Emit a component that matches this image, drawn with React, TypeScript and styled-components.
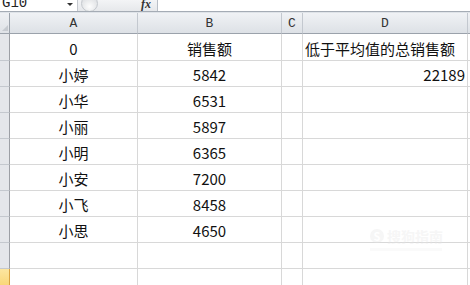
import * as React from "react";
import styled, { createGlobalStyle } from "styled-components";

const GlobalStyle = createGlobalStyle`
  html, body {
    margin: 0;
    padding: 0;
    background: #ffffff;
    overflow: hidden;
  }
  body {
    font-family: "Noto Sans CJK SC", "Liberation Sans", sans-serif;
  }
`;

const Page = styled.div`
  position: relative;
  width: 470px;
  height: 285px;
  overflow: hidden;
  background: #fff;
`;

const FormulaBar = styled.div`
  display: flex;
  align-items: flex-end;
  height: 11px;
  overflow: hidden;
  border-bottom: 1px solid #a5acb5;
  box-shadow: 0 1px 0 #dfe3e8;
  margin-bottom: 1px;
`;

const NameBox = styled.div`
  display: flex;
  align-items: flex-end;
  justify-content: space-between;
  width: 78px;
  height: 11px;
  padding: 0 4px 0 2px;
  box-sizing: border-box;
  font-family: "Liberation Mono", monospace;
  font-size: 14px;
  line-height: 14px;
  color: #222;
  border-right: 1px solid #c5c9cf;
`;

const NameText = styled.span`
  margin-bottom: 1px;
`;

const Arrow = styled.span`
  width: 0;
  height: 0;
  border-left: 3px solid transparent;
  border-right: 3px solid transparent;
  border-top: 3px solid #333;
  margin-bottom: 5px;
`;

const ButtonStrip = styled.div`
  display: flex;
  align-items: flex-end;
  justify-content: space-between;
  width: 80px;
  height: 11px;
  padding: 0 6px 0 3px;
  box-sizing: border-box;
  background: linear-gradient(#f3f4f6, #e6e8eb);
  border-right: 1px solid #b9bfc7;
`;

const RoundKnob = styled.span`
  width: 15px;
  height: 15px;
  border-radius: 50%;
  background: radial-gradient(circle at 50% 70%, #fdfdfd, #d3d6da);
  border: 1px solid #c4c8cd;
  margin-bottom: -1px;
`;

const FxLabel = styled.span`
  font-family: "Liberation Serif", serif;
  font-style: italic;
  font-weight: bold;
  font-size: 12px;
  line-height: 12px;
  color: #333;
  margin-bottom: 1px;
`;

const FormulaInput = styled.div`
  flex: 1;
  height: 11px;
  background: #fff;
`;

const Sheet = styled.div`
  display: grid;
  grid-template-columns: 10px 128px 144px 21px 165px 1fr;
  grid-template-rows: 21px 27px repeat(9, 26px);
`;

const Corner = styled.div`
  position: relative;
  background: linear-gradient(#eef0f3, #dfe2e7);
  border-right: 1px solid #9ba2ab;
  border-bottom: 1px solid #9ba2ab;
  box-sizing: border-box;
  &::after {
    content: "";
    position: absolute;
    right: 1px;
    bottom: 2px;
    border-left: 6px solid transparent;
    border-bottom: 6px solid #c6cad0;
  }
`;

const ColHead = styled.div`
  display: flex;
  align-items: center;
  justify-content: center;
  background: linear-gradient(#f0f2f5, #dde1e6);
  border-right: 1px solid #c3c8cf;
  border-bottom: 1px solid #9ba2ab;
  box-sizing: border-box;
  font-family: "Liberation Mono", monospace;
  font-size: 13px;
  color: #333;
  padding-top: 1px;
`;

const RowHead = styled.div<{ $active?: boolean }>`
  background: ${(p) =>
    p.$active ? "linear-gradient(#fce6a0, #f8cf63)" : "#e4e6ea"};
  border-right: 1px solid ${(p) => (p.$active ? "#d9a240" : "#9c9fa5")};
  border-bottom: 1px solid ${(p) => (p.$active ? "#e9b857" : "#c4c8ce")};
  box-sizing: border-box;
`;

const Cell = styled.div<{ $align?: "left" | "center" | "right" }>`
  display: flex;
  align-items: center;
  justify-content: ${(p) =>
    p.$align === "right" ? "flex-end" : p.$align === "left" ? "flex-start" : "center"};
  padding: 2px 2px 0 2px;
  border-right: 1px solid #d8d8d8;
  border-bottom: 1px solid #d8d8d8;
  box-sizing: border-box;
  font-family: "Noto Sans CJK SC", "Liberation Sans", sans-serif;
  font-size: 15px;
  color: #111;
  white-space: nowrap;
  overflow: visible;
`;

const Watermark = styled.div`
  position: absolute;
  left: 370px;
  top: 228px;
  display: flex;
  flex-direction: column;
  align-items: flex-start;
  opacity: 0.35;
  pointer-events: none;
`;

const MarkRow = styled.div`
  display: flex;
  align-items: center;
  gap: 3px;
  color: #e6e6e6;
  font-size: 14px;
  font-weight: bold;
  line-height: 16px;
`;

const MarkCircle = styled.span`
  width: 14px;
  height: 14px;
  border-radius: 50%;
  background: #e6e6e6;
  color: #fff;
  font-size: 11px;
  line-height: 14px;
  text-align: center;
`;

const MarkSub = styled.div`
  width: 72px;
  height: 3px;
  margin-top: 4px;
  background: #f1f1f1;
`;

type Row = { a: string; b: string; d: string; dAlign?: "left" | "right" };

const rows: Row[] = [
  { a: "0", b: "销售额", d: "低于平均值的总销售额", dAlign: "left" },
  { a: "小婷", b: "5842", d: "22189", dAlign: "right" },
  { a: "小华", b: "6531", d: "" },
  { a: "小丽", b: "5897", d: "" },
  { a: "小明", b: "6365", d: "" },
  { a: "小安", b: "7200", d: "" },
  { a: "小飞", b: "8458", d: "" },
  { a: "小思", b: "4650", d: "" },
  { a: "", b: "", d: "" },
  { a: "", b: "", d: "" },
];

export default function App() {
  return (
    <Page>
      <GlobalStyle />
      <FormulaBar>
        <NameBox>
          <NameText>G10</NameText>
          <Arrow />
        </NameBox>
        <ButtonStrip>
          <RoundKnob />
          <FxLabel>fx</FxLabel>
        </ButtonStrip>
        <FormulaInput />
      </FormulaBar>
      <Sheet>
        <Corner />
        <ColHead>A</ColHead>
        <ColHead>B</ColHead>
        <ColHead>C</ColHead>
        <ColHead>D</ColHead>
        <ColHead />
        {rows.map((r, i) => (
          <React.Fragment key={i}>
            <RowHead $active={i === 9} />
            <Cell>{r.a}</Cell>
            <Cell>{r.b}</Cell>
            <Cell />
            <Cell $align={r.dAlign}>{r.d}</Cell>
            <Cell />
          </React.Fragment>
        ))}
      </Sheet>
      <Watermark>
        <MarkRow>
          <MarkCircle>S</MarkCircle>
          <span>搜狗指南</span>
        </MarkRow>
        <MarkSub />
      </Watermark>
    </Page>
  );
}
